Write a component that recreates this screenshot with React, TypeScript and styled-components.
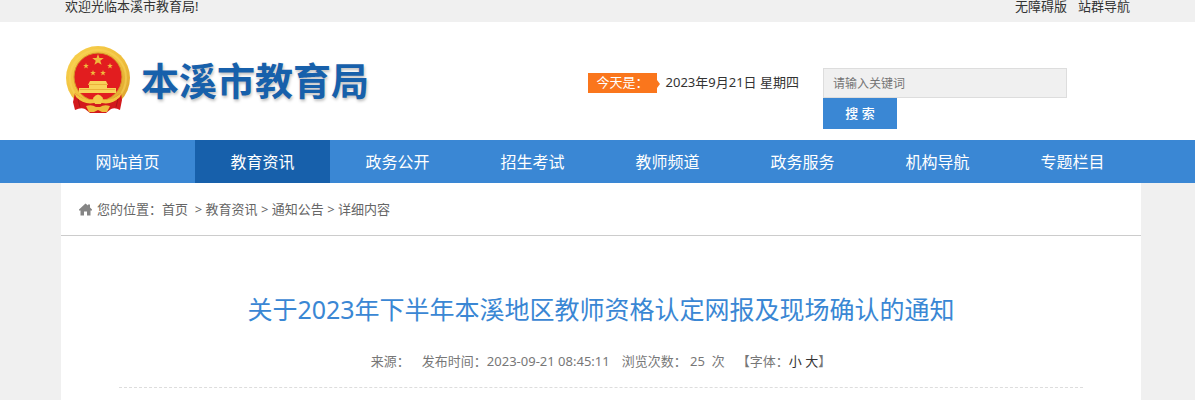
import React from "react";
import styled, { createGlobalStyle } from "styled-components";

const GlobalStyle = createGlobalStyle`
  * { box-sizing: border-box; }
  body {
    margin: 0;
    background: #f0f0f0;
    color: #333;
    font: 13px/20px "Noto Sans", "Noto Sans CJK SC", sans-serif;
    overflow-x: hidden;
  }
  a { color: inherit; text-decoration: none; }
  input, button { font-family: inherit; }
`;

const Band = styled.div`
  padding-left: 7px;
`;

const Container = styled.div`
  max-width: 1080px;
  margin: 0 auto;
`;

const TopBar = styled(Container)`
  display: flex;
  justify-content: space-between;
  height: 22px;
  padding: 0 11px 0 4px;
  line-height: 12px;
`;

const TopLinks = styled.div`
  display: flex;
  gap: 11px;
`;

const HeaderBand = styled(Band)`
  background: #fff;
`;

const Header = styled(Container)`
  display: flex;
  align-items: flex-start;
  height: 118px;
  padding: 0 74px 0 5px;
`;

const Logo = styled.a`
  display: flex;
  align-items: center;
  gap: 10px;
  margin: 24px auto 0 0;
  color: #1760ab;
  font-size: 38px;
  font-weight: 700;
  line-height: 66px;
  white-space: nowrap;
  text-shadow: 1px 2px 3px rgba(0, 0, 0, 0.25);
`;

const Today = styled.div`
  display: flex;
  margin: 51px 24px 0 0;
  line-height: 18px;
  white-space: nowrap;
`;

const TodayTag = styled.span`
  position: relative;
  width: 69px;
  height: 20px;
  margin-right: 9px;
  padding-left: 9px;
  background: #fa761c;
  color: #fff;

  &::after {
    content: "";
    position: absolute;
    top: 7px;
    left: 100%;
    border: solid transparent;
    border-width: 4px 0 4px 3px;
    border-left-color: #fa761c;
  }
`;

const Search = styled.form`
  width: 244px;
  margin-top: 46px;
`;

const SearchInput = styled.input`
  display: block;
  width: 100%;
  height: 30px;
  padding: 0 9px;
  border: 1px solid #ddd;
  border-radius: 0;
  background: #f0f0f0;
  font-size: 12px;

  &::placeholder { color: #757575; }
`;

const SearchButton = styled.button`
  display: block;
  width: 74px;
  height: 31px;
  padding: 0 0 2px;
  border: 0;
  background: #3a87d4;
  color: #fff;
  font-size: 13px;
  font-weight: 500;
`;

const NavBand = styled.nav`
  padding-left: 5px;
  background: #3a87d4;
`;

const NavList = styled(Container)`
  display: flex;
`;

const NavLink = styled.a<{ $active?: boolean }>`
  flex: 1;
  padding-top: 1px;
  background: ${(p) => (p.$active ? "#1760ab" : "transparent")};
  color: #fff;
  font-size: 16px;
  line-height: 42px;
  text-align: center;
`;

const Main = styled(Container)`
  min-height: 217px;
  background: #fff;
`;

const Breadcrumb = styled.div`
  display: flex;
  align-items: center;
  gap: 5px;
  height: 53px;
  padding-left: 18px;
  border-bottom: 1px solid #ccc;
  color: #666;
  white-space: pre;
`;

const Article = styled.article`
  padding: 55px 58px 0;
  text-align: center;
`;

const Title = styled.h1`
  margin: 0;
  color: #3a87d4;
  font-size: 25px;
  font-weight: 400;
  line-height: 36px;
`;

const Meta = styled.div`
  display: flex;
  justify-content: center;
  gap: 12px;
  margin-top: 24px;
  padding-bottom: 16px;
  border-bottom: 1px dashed #ddd;
  color: #777;
  white-space: pre;

  a { color: #333; }
`;

const STAR = "0,-5 1.2,-1.6 4.8,-1.6 1.9,0.6 3,4 0,2 -3,4 -1.9,0.6 -4.8,-1.6 -1.2,-1.6";

const Emblem = () => (
  <svg width="65" height="67" viewBox="0 0 65 67" aria-hidden="true">
    <defs>
      <linearGradient id="gold" x1="0" y1="0" x2="1" y2="1">
        <stop offset="0" stopColor="#f9d24e" />
        <stop offset=".55" stopColor="#efbe3c" />
        <stop offset="1" stopColor="#d99f2b" />
      </linearGradient>
    </defs>
    <circle cx="32" cy="32" r="32" fill="url(#gold)" />
    <circle cx="32" cy="32" r="28" fill="none" stroke="#f8d458" strokeWidth="2" opacity=".6" />
    <circle cx="32" cy="31" r="24" fill="#e21d1f" stroke="#d6982a" />
    <g fill="#f0ba3c">
      <polygon points={STAR} transform="translate(32 14) scale(1.2)" />
      <polygon points={STAR} transform="translate(20 20) scale(.6)" />
      <polygon points={STAR} transform="translate(44 20) scale(.6)" />
      <polygon points={STAR} transform="translate(27 27) scale(.6)" />
      <polygon points={STAR} transform="translate(37 27) scale(.6)" />
    </g>
    <path d="M24 35 H40 L42 39 H41 V42 H50 V47 H13 V42 H23 V39 H22 Z" fill="#f8d35a" />
    <path d="M23 38.5 H41 M14 43.5 H49" stroke="#eab23a" />
    <path d="M9 47 Q17 54 25 56 L32 58 L39 56 Q47 54 55 47 L56 54 L54 64 Q49 61 45 63 L40 67 H24 L19 63 Q15 61 9 64 L7 56 Z" fill="#d3191c" />
    <path d="M8 46 Q18 56 28 53 Q32 47 36 53 Q46 56 56 46 L54 51 Q46 59 36 57 H28 Q18 59 10 51 Z" fill="#f3c541" />
    <path d="M27 52 Q32 45 37 52 L35 58 H29 Z" fill="#f5cb4b" />
    <path d="M20 60 Q26 58 30 61 H34 Q38 58 44 60 L41 66 H36 L32 64 L28 66 H23 Z" fill="#efbc3b" />
    <path d="M12 53 L14 61 M52 53 L50 61" stroke="#aa1418" />
  </svg>
);

const HomeIcon = () => (
  <svg width="13" height="13" viewBox="0 0 13 13" aria-hidden="true">
    <path d="M6.5 .5 L9 2.6 V1.5 H11 V4.4 L13 6.4 V7.5 H11.5 V12.5 H8 V8.5 H5 V12.5 H1.5 V7.5 H0 V6.4 Z" fill="#858585" />
  </svg>
);

const NAV = ["网站首页", "教育资讯", "政务公开", "招生考试", "教师频道", "政务服务", "机构导航", "专题栏目"];

export default function App() {
  return (
    <>
      <GlobalStyle />
      <Band>
        <TopBar>
          <span>欢迎光临本溪市教育局!</span>
          <TopLinks>
            <a href="#accessible">无障碍版</a>
            <a href="#sites">站群导航</a>
          </TopLinks>
        </TopBar>
      </Band>
      <HeaderBand>
        <Header as="header">
          <Logo href="#home">
            <Emblem />
            <span>本溪市教育局</span>
          </Logo>
          <Today>
            <TodayTag>今天是：</TodayTag>
            <span>2023年9月21日 星期四</span>
          </Today>
          <Search onSubmit={(e) => e.preventDefault()}>
            <SearchInput type="text" aria-label="请输入关键词" placeholder="请输入关键词" />
            <SearchButton type="submit">搜 索</SearchButton>
          </Search>
        </Header>
      </HeaderBand>
      <NavBand>
        <NavList>
          {NAV.map((label, i) => (
            <NavLink key={label} href={`#nav-${i}`} $active={i === 1}>
              {label}
            </NavLink>
          ))}
        </NavList>
      </NavBand>
      <Band>
        <Main as="main">
          <Breadcrumb>
            <HomeIcon />
            <span>
              您的位置：<a href="#home">首页</a>
              {"  > "}
              <a href="#news">教育资讯</a>
              {" > "}
              <a href="#notice">通知公告</a>
              {" > 详细内容"}
            </span>
          </Breadcrumb>
          <Article>
            <Title>关于2023年下半年本溪地区教师资格认定网报及现场确认的通知</Title>
            <Meta>
              <span>来源：</span>
              <span>发布时间：2023-09-21 08:45:11</span>
              <span>{"浏览次数： 25  次"}</span>
              <span>
                【字体：<a href="#small">小</a> <a href="#large">大</a>】
              </span>
            </Meta>
          </Article>
        </Main>
      </Band>
    </>
  );
}
